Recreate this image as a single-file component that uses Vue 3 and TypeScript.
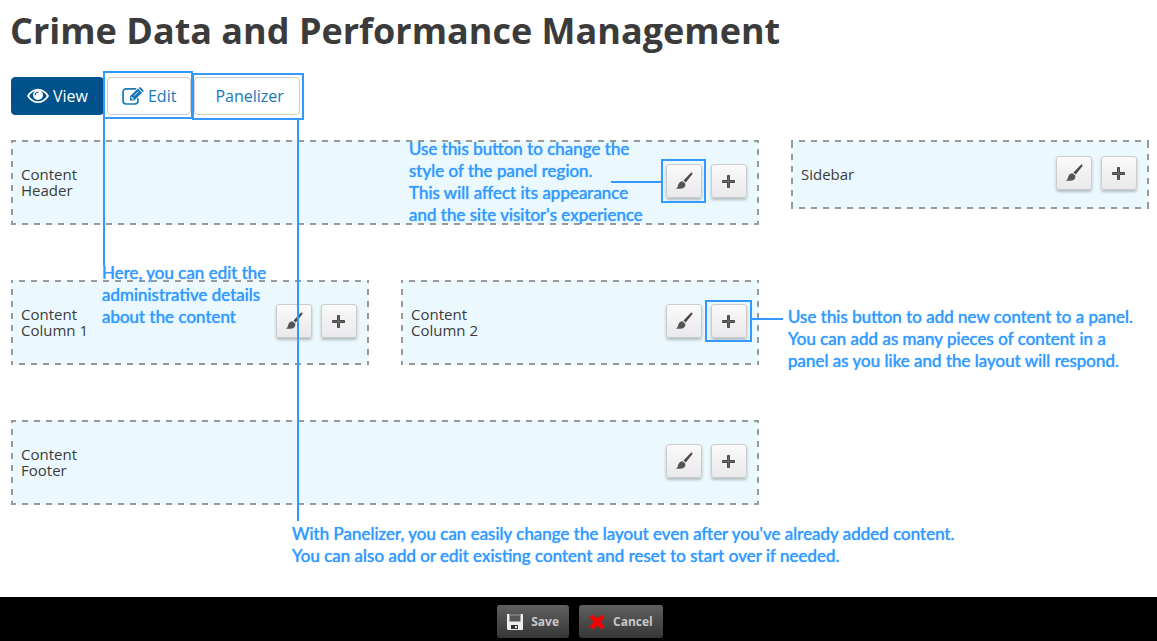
<script setup lang="ts">
interface Panel {
  id: string
  label: string
}

const panels: Panel[] = [
  { id: 'header', label: 'Content Header' },
  { id: 'sidebar', label: 'Sidebar' },
  { id: 'column-one', label: 'Content Column 1' },
  { id: 'column-two', label: 'Content Column 2' },
  { id: 'footer', label: 'Content Footer' },
]
</script>

<template>
  <div class="page">
    <main class="content">
      <h1 class="title">Crime Data and Performance Management</h1>

      <nav class="tabs">
        <a href="#view" class="tab tab-active">
          <svg class="tab-icon" width="22" height="16" viewBox="0 0 22 16" aria-hidden="true">
            <path d="M1 8C3.600 4 7 1.700 11 1.700S18.400 4 21 8c-2.600 4-6 6.200-10 6.200S3.600 12 1 8Z" fill="none" stroke="currentColor" stroke-width="1.700" />
            <circle cx="11" cy="7" r="5" fill="currentColor" />
            <path d="M8 7a3 3 0 0 1 3-3" fill="none" stroke="#00528c" stroke-width="1" stroke-linecap="round" />
          </svg>
          View
        </a>
        <a href="#edit" class="tab tab-edit">
          <svg class="tab-icon" width="22" height="18" viewBox="0 0 22 18" aria-hidden="true">
            <path d="M13.500 1.800H4.200A3.200 3.200 0 0 0 1 5v8.800A3.200 3.200 0 0 0 4.200 17h8.600a3.200 3.200 0 0 0 3.200-3.200V11.800" fill="none" stroke="currentColor" stroke-width="1.700" stroke-linecap="round" />
            <path d="M8 9.300 15.800 1.600l4.300 4.200-7.900 7.800H8Z" fill="currentColor" />
            <path d="m16.600.900.400-.400q.800-.700 1.700.1l2.500 2.500q.800.800.100 1.600l-.500.500Z" fill="currentColor" />
            <path d="M9.400 9.900v1h1.300v1.300h1" fill="none" stroke="#fff" stroke-width="1" />
            <path d="m12.300 8.600 3.900-3.900" stroke="#fff" stroke-width=".8" />
          </svg>
          Edit
        </a>
        <a href="#panelizer" class="tab tab-panelizer">Panelizer</a>
      </nav>

      <div class="panels">
        <section v-for="panel in panels" :key="panel.id" class="panel" :class="panel.id">
          <h2 class="panel-label">{{ panel.label }}</h2>
          <div class="panel-actions">
            <button type="button" class="tool" :aria-label="`Change style of ${panel.label}`">
              <svg width="18" height="18" viewBox="0 0 18 18" aria-hidden="true">
                <path d="M17 .600c.700.500.600 1.200.100 1.900l-6.400 8-2.200-1.900L15.700 1Q16.400.300 17 .600Z" fill="#484848" />
                <path d="m7.600 9.200 2.600 2.200c.700 2.600-1 4.800-3.600 5.200-2 .4-4 .3-6-.1 2.300-.7 2-2.200 2.800-4.300.7-1.900 2.200-3 4.200-3Z" fill="#555" />
              </svg>
            </button>
            <button type="button" class="tool" :aria-label="`Add content to ${panel.label}`">
              <svg width="14" height="14" viewBox="0 0 14 14" aria-hidden="true">
                <path d="M5.500 1.500h2v5h5v2h-5v5h-2v-5h-5v-2h5Z" fill="#666" stroke="#484848" />
              </svg>
            </button>
          </div>
        </section>
      </div>
    </main>

    <footer class="actions">
      <button type="button" class="action">
        <svg width="16" height="16" viewBox="0 0 16 16" aria-hidden="true">
          <path d="M0 0h16v16H1l-1-1Z" fill="#eee" />
          <path d="M2.500 0h11v7.500h-11Z" fill="#555" />
          <path d="M2.500 1h11" stroke="#999" />
          <path d="M4 11h7v4H4Z" fill="#333" />
          <path d="M8 12h2v2H8Z" fill="#eee" />
        </svg>
        Save
      </button>
      <button type="button" class="action">
        <svg width="16" height="16" viewBox="0 0 16 16" aria-hidden="true">
          <path d="m3.500.500 4.500 4 4.500-4 3 3-4.200 4.500 4.200 4.500-3 3-4.500-4-4.500 4-3-3L4.700 8 .500 3.500Z" fill="#f60000" />
        </svg>
        Cancel
      </button>
    </footer>

    <div class="guide">
      <span class="box box-edit"></span>
      <span class="box box-panelizer"></span>
      <span class="box box-style"></span>
      <span class="box box-add"></span>
      <span class="line line-edit"></span>
      <span class="line line-panelizer"></span>
      <span class="line line-style"></span>
      <span class="line line-add"></span>
      <p class="note note-style">
        Use this button to change the<br />style of the panel region.<br />This will affect its appearance<br />and the site visitor's experience
      </p>
      <p class="note note-edit">
        Here, you can edit the<br />administrative details<br />about the content
      </p>
      <p class="note note-add">
        Use this button to add new content to a panel.<br />You can add as many pieces of content in a<br />panel as you like and the layout will respond.
      </p>
      <p class="note note-panelizer">
        With Panelizer, you can easily change the layout even after you've already added content.<br />You can also add or edit existing content and reset to start over if needed.
      </p>
    </div>
  </div>
</template>

<style>
body {
  margin: 0;
  background: #fff;
}
</style>

<style scoped>
.page {
  position: relative;
  box-sizing: border-box;
  display: flex;
  flex-direction: column;
  min-height: 100vh;
  font-family: "Open Sans", "Noto Sans", sans-serif;
  color: #3b3b3b;
}

.content {
  flex: 1;
  padding: 7px 8px 32px 10px;
}

.title {
  margin: 0;
  font-size: 36px;
  line-height: 48px;
  font-weight: 700;
}

.tabs {
  display: flex;
  margin: 22px 0 0 1px;
  gap: 3px;
}

.tab {
  box-sizing: border-box;
  display: flex;
  align-items: center;
  gap: 4px;
  height: 38px;
  padding: 0 15px;
  border: 1px solid #ccc;
  border-radius: 4px;
  color: #1779ba;
  font-size: 16px;
  text-decoration: none;
}

.tab-active {
  border-color: #00528c;
  background: #00528c;
  color: #fff;
}

.tab-edit {
  padding: 0 14px;
}

.tab-icon {
  flex: none;
}

.tab-panelizer {
  padding-left: 20px;
}

.panels {
  display: grid;
  grid-template-columns: repeat(3, 1fr);
  column-gap: 32px;
  row-gap: 55px;
  align-items: start;
  margin: 25px 0 0 1px;
}

.panel {
  --dash-x: 8px;
  --dash-y: 9px;
  --dash: #999 0 6px, transparent 6px 12px;
  box-sizing: border-box;
  display: flex;
  align-items: center;
  justify-content: space-between;
  min-height: 85px;
  padding: 8px 12px 8px 10px;
  background:
    repeating-linear-gradient(90deg, var(--dash)) var(--dash-x) 0 / 1200px 2px repeat-x,
    repeating-linear-gradient(90deg, var(--dash)) var(--dash-x) 100% / 1200px 2px repeat-x,
    repeating-linear-gradient(180deg, var(--dash)) 0 var(--dash-y) / 2px 1200px repeat-y,
    repeating-linear-gradient(180deg, var(--dash)) 100% var(--dash-y) / 2px 1200px repeat-y,
    #ebf9ff;
}

.header,
.footer {
  --dash-x: 11px;
  grid-column: span 2;
}

.sidebar {
  --dash-y: 2px;
  min-height: 69px;
}

.panel-label {
  width: 76px;
  margin: 0 0 2px;
  font-size: 15px;
  line-height: 16px;
  font-weight: 400;
}

.panel-actions {
  display: flex;
  gap: 9px;
  margin-bottom: 3px;
}

.tool {
  box-sizing: border-box;
  display: flex;
  align-items: center;
  justify-content: center;
  width: 36px;
  height: 34px;
  padding: 0;
  border: 1px solid #ccc;
  border-radius: 3px;
  background: linear-gradient(#fafafa, #e9e9eb);
  box-shadow: 0 2px 3px rgba(0, 0, 0, 0.25);
  cursor: pointer;
}

.actions {
  display: flex;
  justify-content: center;
  gap: 10px;
  padding: 8px 0 3px 3px;
  background: #000;
}

.action {
  display: flex;
  align-items: center;
  gap: 8px;
  height: 33px;
  padding: 0 10px;
  border: 0;
  border-radius: 3px;
  background: linear-gradient(#606060, #363636);
  color: #c8c8c8;
  font-family: inherit;
  font-size: 12px;
  font-weight: 700;
  cursor: pointer;
}

.guide {
  position: absolute;
  inset: 0;
  pointer-events: none;
}

.box,
.line,
.note {
  position: absolute;
  box-sizing: border-box;
}

.box {
  border: 2px solid #3399ff;
}

.box-edit {
  left: 103px;
  top: 71px;
  width: 90px;
  height: 48px;
}

.box-panelizer {
  left: 192px;
  top: 73px;
  width: 112px;
  height: 47px;
}

.box-style {
  left: 661px;
  top: 159px;
  width: 45px;
  height: 44px;
}

.box-add {
  left: 705px;
  top: 300px;
  width: 47px;
  height: 42px;
}

.line {
  background: #3399ff;
}

.line-edit {
  left: 103px;
  top: 118px;
  width: 2px;
  height: 148px;
}

.line-panelizer {
  left: 297px;
  top: 119px;
  width: 2px;
  height: 402px;
}

.line-style {
  left: 611px;
  top: 181px;
  width: 51px;
  height: 2px;
}

.line-add {
  left: 751px;
  top: 318px;
  width: 32px;
  height: 2px;
}

.note {
  margin: 0;
  color: #3399ff;
  font-family: Lato, "Open Sans", sans-serif;
  font-size: 17px;
  line-height: 22px;
  font-weight: 400;
  text-shadow: 0 0 1px #3399ff;
  white-space: nowrap;
}

.note-style {
  left: 409px;
  top: 138px;
}

.note-edit {
  left: 102px;
  top: 262px;
}

.note-add {
  left: 788px;
  top: 306px;
}

.note-panelizer {
  left: 292px;
  top: 523px;
}
</style>
